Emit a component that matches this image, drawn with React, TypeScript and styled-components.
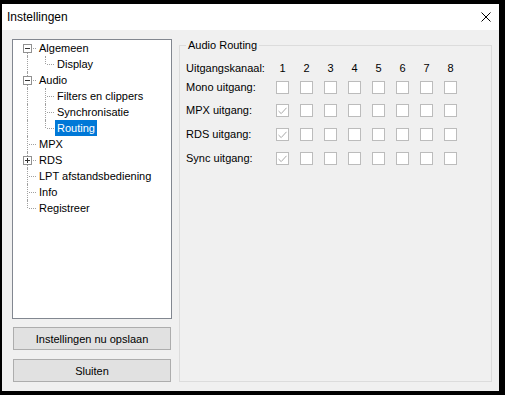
import * as React from "react";
import styled, { createGlobalStyle } from "styled-components";

const GlobalStyle = createGlobalStyle`
    html, body {
        margin: 0;
        padding: 0;
        background: #000;
    }
    body {
        width: 505px;
        height: 395px;
        overflow: hidden;
        font-family: "Liberation Sans", Arial, sans-serif;
        font-size: 11px;
        color: #000;
    }
`;

const Window = styled.div`
    margin: 4px 6px 4px 2px;
    width: 497px;
    height: 387px;
    display: flex;
    flex-direction: column;
    background: #f0f0f0;
`;

const TitleBar = styled.div`
    height: 26px;
    flex: none;
    background: #fff;
    display: flex;
    align-items: center;
    justify-content: space-between;
    padding: 0 8px 0 5px;
    font-size: 12px;
`;

const Client = styled.div`
    flex: 1;
    display: flex;
    gap: 7px;
    padding: 9px 7px 9px 10px;
`;

const LeftColumn = styled.div`
    width: 160px;
    flex: none;
    display: flex;
    flex-direction: column;
`;

const TreeBox = styled.div`
    height: 280px;
    box-sizing: border-box;
    border: 1px solid #828790;
    background: #fff;
    padding-left: 5px;
`;

const TreeRow = styled.div`
    display: flex;
    height: 16px;
`;

const Guide = styled.div<{ $up?: boolean; $down?: boolean; $branch?: boolean }>`
    position: relative;
    width: 18px;
    height: 16px;
    flex: none;

    &::before {
        content: "";
        position: absolute;
        left: 9px;
        top: ${p => (p.$up ? "0" : "8px")};
        bottom: ${p => (p.$down ? "0" : "8px")};
        border-left: 1px dotted #a0a0a0;
    }

    &::after {
        content: ${p => (p.$branch ? '""' : "none")};
        position: absolute;
        left: 11px;
        right: 0;
        top: 8px;
        border-top: 1px dotted #a0a0a0;
    }
`;

const Expander = styled.svg`
    position: absolute;
    left: 5px;
    top: 4px;
    z-index: 1;
`;

const NodeLabel = styled.span<{ $selected?: boolean }>`
    margin-left: 1px;
    padding: 0 2px;
    line-height: 16px;
    white-space: nowrap;
    background: ${p => (p.$selected ? "#0078d7" : "transparent")};
    color: ${p => (p.$selected ? "#fff" : "#000")};
`;

const Button = styled.button<{ $gap: number }>`
    height: 23px;
    margin: ${p => p.$gap}px 1px 0;
    border: 1px solid #adadad;
    background: #e1e1e1;
    font-family: inherit;
    font-size: 11px;
    color: #000;
    padding: 0;
`;

const Group = styled.fieldset`
    flex: 1;
    min-width: 0;
    margin: 0;
    border: 1px solid #dcdcdc;
    padding: 10px 6px 0;
`;

const Legend = styled.legend`
    padding: 0 2px;
    line-height: 13px;
    background: #f0f0f0;
`;

const RoutingGrid = styled.div`
    display: grid;
    grid-template-columns: 79px repeat(8, 13px);
    grid-template-rows: 19px 23px 24px 24px 13px;
    column-gap: 11px;
    align-items: start;
`;

const Cell = styled.div<{ $center?: boolean }>`
    line-height: 13px;
    white-space: nowrap;
    text-align: ${p => (p.$center ? "center" : "left")};
`;

const Box = styled.div`
    width: 13px;
    height: 13px;
    box-sizing: border-box;
    border: 1px solid #bcbcbc;
    background: #fff;
    display: flex;
    align-items: center;
    justify-content: center;
`;

type GuideKind = "line" | "tee" | "first" | "last";

interface Node {
    label: string;
    guides: GuideKind[];
    expander?: "minus" | "plus";
    selected?: boolean;
}

const nodes: Node[] = [
    { label: "Algemeen", guides: ["first"], expander: "minus" },
    { label: "Display", guides: ["line", "last"] },
    { label: "Audio", guides: ["tee"], expander: "minus" },
    { label: "Filters en clippers", guides: ["line", "tee"] },
    { label: "Synchronisatie", guides: ["line", "tee"] },
    { label: "Routing", guides: ["line", "last"], selected: true },
    { label: "MPX", guides: ["tee"] },
    { label: "RDS", guides: ["tee"], expander: "plus" },
    { label: "LPT afstandsbediening", guides: ["tee"] },
    { label: "Info", guides: ["tee"] },
    { label: "Registreer", guides: ["last"] },
];

const rows = [
    { label: "Mono uitgang:", checked: [] as number[] },
    { label: "MPX uitgang:", checked: [0] },
    { label: "RDS uitgang:", checked: [0] },
    { label: "Sync uitgang:", checked: [0] },
];

const channels = [1, 2, 3, 4, 5, 6, 7, 8];

const ExpandIcon: React.FC<{ kind: "minus" | "plus" }> = ({ kind }) => (
    <Expander width="9" height="9" viewBox="0 0 9 9">
        <rect x="0.5" y="0.5" width="8" height="8" fill="#fff" stroke="#919191" />
        <line x1="2" y1="4.5" x2="7" y2="4.5" stroke="#333" />
        {kind === "plus" && <line x1="4.5" y1="2" x2="4.5" y2="7" stroke="#333" />}
    </Expander>
);

const TreeNode: React.FC<{ node: Node }> = ({ node }) => {
    const last = node.guides.length - 1;
    return (
        <TreeRow>
            {node.guides.map((g, i) => (
                <Guide key={i}
                    $up={g !== "first"}
                    $down={g !== "last"}
                    $branch={g !== "line"}>
                    {i === last && node.expander && <ExpandIcon kind={node.expander} />}
                </Guide>
            ))}
            <NodeLabel $selected={node.selected}>{node.label}</NodeLabel>
        </TreeRow>
    );
};

const Check: React.FC<{ checked: boolean }> = ({ checked }) => (
    <Box>
        {checked && (
            <svg width="9" height="8" viewBox="0 0 9 8">
                <polyline points="0.5,4 3.2,6.6 8.5,0.8" fill="none" stroke="#a8a8a8" strokeWidth="1" />
            </svg>
        )}
    </Box>
);

const App: React.FC = () => {
    return (
        <>
            <GlobalStyle />
            <Window>
                <TitleBar>
                    <span>Instellingen</span>
                    <svg width="10" height="10" viewBox="0 0 10 10">
                        <path d="M0.5 0.5 L9.5 9.5 M9.5 0.5 L0.5 9.5" stroke="#000" strokeWidth="1" />
                    </svg>
                </TitleBar>
                <Client>
                    <LeftColumn>
                        <TreeBox>
                            {nodes.map(n => <TreeNode key={n.label} node={n} />)}
                        </TreeBox>
                        <Button $gap={8}>Instellingen nu opslaan</Button>
                        <Button $gap={9}>Sluiten</Button>
                    </LeftColumn>
                    <Group>
                        <Legend>Audio Routing</Legend>
                        <RoutingGrid>
                            <Cell>Uitgangskanaal:</Cell>
                            {channels.map(c => <Cell key={c} $center>{c}</Cell>)}
                            {rows.map(r => (
                                <React.Fragment key={r.label}>
                                    <Cell>{r.label}</Cell>
                                    {channels.map((c, i) => (
                                        <Check key={c} checked={r.checked.includes(i)} />
                                    ))}
                                </React.Fragment>
                            ))}
                        </RoutingGrid>
                    </Group>
                </Client>
            </Window>
        </>
    );
};

export default App;
